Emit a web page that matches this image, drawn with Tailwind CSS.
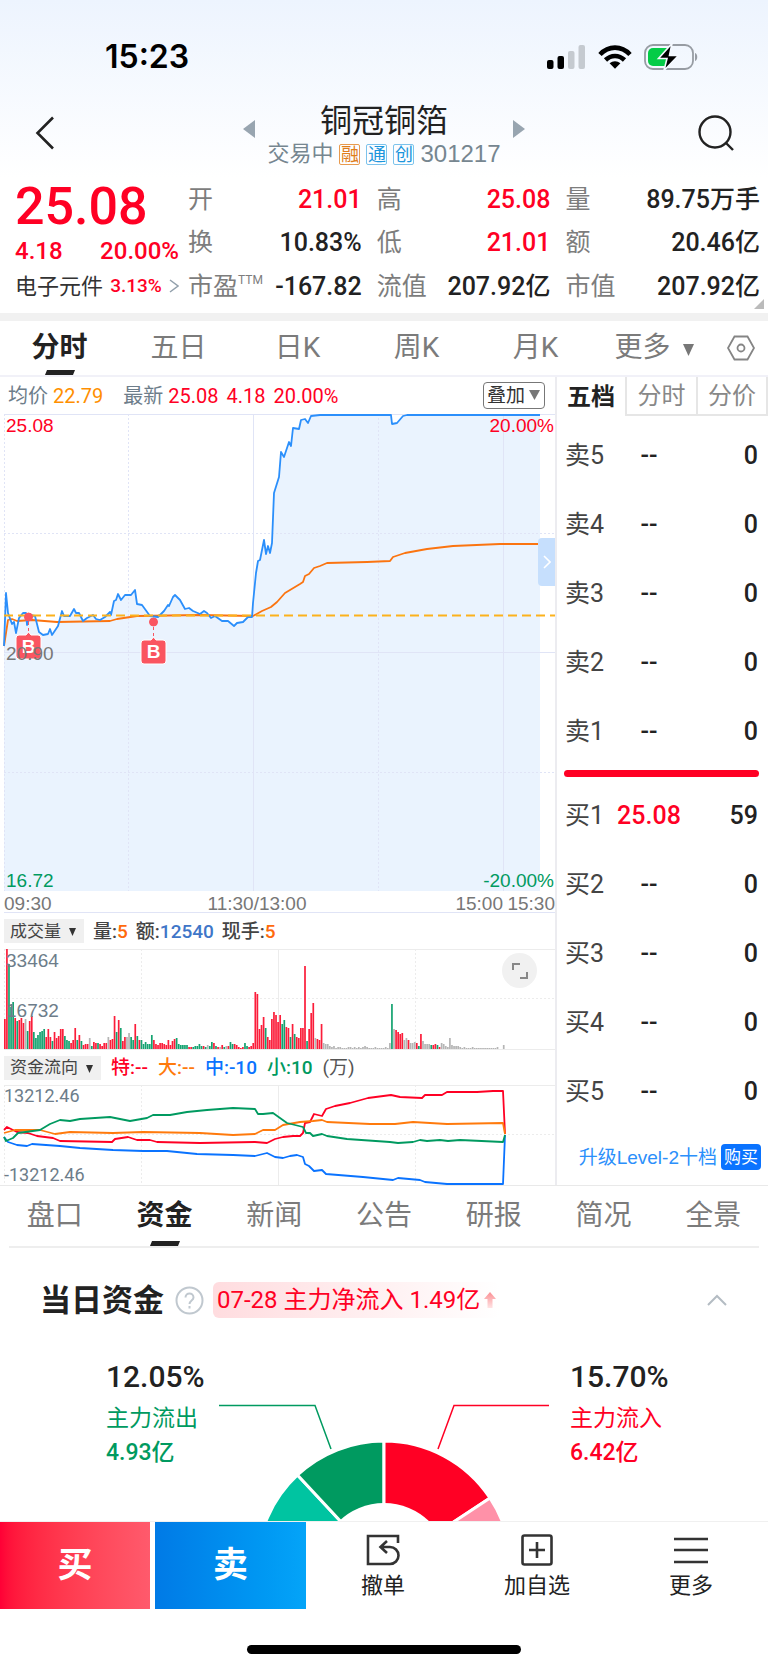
<!DOCTYPE html>
<html lang="zh-CN">
<head>
    <meta charset="UTF-8">
    <meta name="viewport" content="width=device-width, initial-scale=1.0">
    <title>铜冠铜箔 301217</title>
    <script src="https://cdn.jsdelivr.net/npm/@tailwindcss/browser@4"></script>
    <style>
        body {
            font-family: Roboto, "Noto Sans CJK SC", sans-serif;
        }
        .arial {
            font-family: "Liberation Sans", "Noto Sans CJK SC", sans-serif;
        }
    </style>
</head>
<body class="bg-white text-[#222]">
    <!-- Header -->
    <header class="bg-linear-to-b from-[#edf4fe] to-white">
        <div class="flex justify-between items-center pl-[105px] pr-[70px] pt-9 h-[78px]">
            <span class="text-[32px] leading-none font-semibold text-black font-[Inter]">15:23</span>
            <div class="flex items-center gap-3">
                <svg class="w-[39px] h-6" viewBox="0 0 39 24">
                    <rect x="0" y="15" width="6.500" height="9" rx="2" />
                    <rect x="10.500" y="11" width="6.500" height="13" rx="2" />
                    <rect x="21" y="6" width="6.500" height="18" rx="2" fill="#c5cad0" />
                    <rect x="31.500" y="0" width="6.500" height="24" rx="2" fill="#c5cad0" />
                </svg>
                <svg class="w-[34px] h-6" viewBox="0 0 34 24" fill="none" stroke="#000" stroke-width="4.600">
                    <path d="M2 9.500C10.500 0.300 23.500 0.300 32 9.500" />
                    <path d="M7.500 15C13 9.600 21 9.600 26.500 15" />
                    <path d="M17 23.800L11.600 18.300C14.800 15.600 19.200 15.600 22.400 18.300Z" fill="#000" stroke="none" />
                </svg>
                <svg class="w-[54px] h-7" viewBox="0 0 54 28">
                    <rect x="1" y="2" width="48" height="24" rx="8" fill="none" stroke="#979ca3" stroke-width="1.800" />
                    <path d="M51 10c3 1 3 7 0 8z" fill="#979ca3" />
                    <path d="M9 5h14v18H9a5 5 0 0 1-5-5v-8a5 5 0 0 1 5-5z" fill="#04cc47" />
                    <path d="M28 0.500L14.500 15.500h8.500L20 27.500 34.500 12.500h-9z" stroke="#f5f9ff" stroke-width="1.600" />
                </svg>
            </div>
        </div>
        <div class="flex justify-between items-center px-[34px] h-[100px] pt-[10px]">
            <button class="w-9" aria-label="返回">
                <svg class="w-[22px] h-[34px]" viewBox="0 0 22 34" fill="none" stroke="#222" stroke-width="2.600"><path d="M19 1.500L3.500 17L19 32.500" /></svg>
            </button>
            <div class="flex items-center gap-3">
                <button aria-label="上一只"><svg class="w-3 h-[18px] mb-2" viewBox="0 0 12 18"><path d="M12 0v18L0 9z" fill="#98a5b0" /></svg></button>
                <div class="flex flex-col items-center">
                    <h1 class="text-[32px] leading-[42px]">铜冠铜箔</h1>
                    <div class="flex items-center gap-[6px] h-6 text-[#768690] text-[22px] leading-none">
                        <span>交易中</span>
                        <span class="border border-[#e89a4e] text-[#e07d1a] text-[18px] leading-[19px] w-[21px] h-[21px] flex justify-center rounded-xs">融</span>
                        <span class="border border-[#7cc3ec] text-[#1b95dc] text-[18px] leading-[19px] w-[21px] h-[21px] flex justify-center rounded-xs">通</span>
                        <span class="border border-[#7cc3ec] text-[#1b95dc] text-[18px] leading-[19px] w-[21px] h-[21px] flex justify-center rounded-xs">创</span>
                        <span class="arial text-2xl leading-none">301217</span>
                    </div>
                </div>
                <button aria-label="下一只"><svg class="w-3 h-[18px] mb-2" viewBox="0 0 12 18"><path d="M0 0v18l12-9z" fill="#98a5b0" /></svg></button>
            </div>
            <button class="w-9" aria-label="搜索">
                <svg class="w-9 h-9" viewBox="0 0 36 36" fill="none" stroke="#222" stroke-width="2.400"><circle cx="17" cy="17" r="15.500" /><path d="M28 28l7 7" /></svg>
            </button>
        </div>
    </header>

    <!-- Quote -->
    <section class="relative flex h-[143px] pr-2 border-b-8 border-[#f1f1f1] whitespace-nowrap">
        <div class="w-[188px] shrink-0 pl-[15px] pr-[9px] text-[#ff0024]">
            <div class="text-[52px] leading-[58px] font-medium">25.08</div>
            <div class="flex justify-between text-2xl leading-[30px] font-medium"><span>4.18</span><span>20.00%</span></div>
            <a href="#" class="flex items-center justify-between h-10 text-[#333]">
                <span class="text-[22px]">电子元件</span>
                <span class="text-[19px] font-medium text-[#ff0024]">3.13%</span>
                <svg class="w-[10px] h-[14px]" viewBox="0 0 10 14" fill="none" stroke="#92a0ac" stroke-width="1.500"><path d="M1 1l8 6-8 6" /></svg>
            </a>
        </div>
        <dl class="grow grid grid-cols-[1fr_1fr_1.12fr] grid-rows-[43px_43px_44px] gap-x-[15px] text-[25px] leading-none [&>div]:flex [&>div]:justify-between [&>div]:items-center [&_dt]:text-[#7d7d7d] [&_dd]:font-medium">
            <div><dt>开</dt><dd class="text-[#ff0024]">21.01</dd></div>
            <div><dt>高</dt><dd class="text-[#ff0024]">25.08</dd></div>
            <div><dt>量</dt><dd>89.75万手</dd></div>
            <div><dt>换</dt><dd>10.83%</dd></div>
            <div><dt>低</dt><dd class="text-[#ff0024]">21.01</dd></div>
            <div><dt>额</dt><dd>20.46亿</dd></div>
            <div><dt class="flex">市盈<span class="text-[12px]">TTM</span></dt><dd>-167.82</dd></div>
            <div><dt>流值</dt><dd>207.92亿</dd></div>
            <div><dt>市值</dt><dd>207.92亿</dd></div>
        </dl>
        <svg class="absolute right-1 bottom-1 w-[10px] h-[10px]" viewBox="0 0 10 10"><path d="M10 0v10H0z" fill="#bbb" /></svg>
    </section>

    <!-- Period tabs -->
    <nav class="grid grid-cols-[119fr_119fr_119fr_119fr_119fr_118fr_55fr] h-14 border-b-2 border-[#f1f1f8] text-[28px] leading-none text-[#7b7b7b]">
        <button class="relative font-bold text-[#222]">分时
            <svg class="absolute bottom-0 left-1/2 -translate-x-1/2 w-[30px] h-[5px]" viewBox="0 0 30 5"><path d="M2 0h28l-2 5H0z" fill="#222" /></svg>
        </button>
        <button>五日</button>
        <button>日K</button>
        <button>周K</button>
        <button>月K</button>
        <button class="flex items-center justify-center gap-3">更多<svg class="w-[11px] h-3 mt-1" viewBox="0 0 11 12"><path d="M0 0h11L5.500 12z" fill="#777" /></svg></button>
        <button class="flex items-center justify-center" aria-label="设置">
            <svg class="w-7 h-[26px]" viewBox="0 0 28 26" fill="none" stroke="#858585" stroke-width="1.800"><path d="M7.500 1.500h13L27 13l-6.500 11.500h-13L1 13z" /><circle cx="14" cy="13" r="3.500" /></svg>
        </button>
    </nav>

    <main class="flex border-b border-[#e9e9e9]">
        <!-- Charts -->
        <div class="grow min-w-0">
            <div class="flex items-center h-[37px] pl-2 pr-[10px] text-xl leading-none text-[#ff0024] whitespace-nowrap">
                <span class="text-[#6d7d8a]">均价</span><span class="ml-[5px] text-[#ff8f00]">22.79</span>
                <span class="ml-5 text-[#6d7d8a]">最新</span><span class="ml-[5px]">25.08</span>
                <span class="ml-2">4.18</span><span class="ml-2">20.00%</span>
                <div class="relative ml-auto">
                    <select aria-label="叠加" class="appearance-none block w-[62px] h-[27px] pl-[3px] border border-[#777] rounded text-[19px] leading-none text-[#333]"><option>叠加</option></select>
                    <svg class="absolute right-[5px] top-2 w-[11px] h-[10px] pointer-events-none" viewBox="0 0 11 10"><path d="M0 0h11L5.500 10z" fill="#777" /></svg>
                </div>
            </div>

            <div class="relative">
                <svg class="arial block w-full text-[19px]" viewBox="0 0 555 499">
                    <path id="price-area" fill="#eaf3fe" />
                    <g stroke="#e0e4f6" fill="none">
                        <path d="M4 .5H555M4 238.500H555M253.500 0V477M503.500 0V477" />
                        <path d="M4 119.500H555M4 358.500H555M4.500 0V477M128.500 0V477M378.500 0V477" stroke-dasharray="2 2" />
                        <path d="M4 498.500H555" />
                    </g>
                    <polyline id="avg-line" fill="none" stroke="#fb7410" stroke-width="1.800" stroke-linejoin="round" />
                    <polyline id="price-line" fill="none" stroke="#2b8ffb" stroke-width="1.800" stroke-linejoin="round" />
                    <path d="M4 201.500H555" stroke="#fcb21c" stroke-width="2" stroke-dasharray="9 5" />
                    <g fill="#fa5560" stroke="#fa5560">
                        <circle cx="28.500" cy="203" r="4" />
                        <path d="M28.500 208v12" stroke-dasharray="3 3" />
                        <path d="M19 221h7l2.500-3 2.500 3h7a3 3 0 0 1 3 3v18a3 3 0 0 1-3 3H19a3 3 0 0 1-3-3v-18a3 3 0 0 1 3-3z" stroke="#fff" />
                        <circle cx="153.500" cy="208" r="4" />
                        <path d="M153.500 213v12" stroke-dasharray="3 3" />
                        <path d="M144 226h7l2.500-3 2.500 3h7a3 3 0 0 1 3 3v18a3 3 0 0 1-3 3h-19a3 3 0 0 1-3-3v-18a3 3 0 0 1 3-3z" stroke="#fff" />
                    </g>
                    <g fill="#fff" font-weight="bold" text-anchor="middle"><text x="28.500" y="239">B</text><text x="153.500" y="244">B</text></g>
                    <text x="6" y="18" fill="#ff0024">25.08</text>
                    <text x="554" y="18" fill="#ff0024" text-anchor="end">20.00%</text>
                    <text x="6" y="246" fill="#777">20.90</text>
                    <text x="6" y="473" fill="#009a60">16.72</text>
                    <text x="554" y="473" fill="#009a60" text-anchor="end">-20.00%</text>
                    <g fill="#777">
                        <text x="4" y="496">09:30</text>
                        <text x="257" y="496" text-anchor="middle">11:30/13:00</text>
                        <text x="503" y="496" text-anchor="end">15:00</text>
                        <text x="555" y="496" text-anchor="end">15:30</text>
                    </g>
                </svg>
                <button aria-label="收起" class="absolute right-0 top-[124px] w-[17px] h-12 rounded-l bg-[#c6dffd] flex items-center justify-center">
                    <svg class="w-2 h-[14px]" viewBox="0 0 8 14" fill="none" stroke="#fff" stroke-width="1.600"><path d="M1 1l6 6-6 6" /></svg>
                </button>
            </div>

            <div class="flex items-center h-[36px] pl-1 text-[19px] leading-none font-medium text-[#444] whitespace-nowrap">
                <div class="relative mr-[9px]">
                    <select aria-label="副图指标" class="appearance-none block w-20 h-6 pl-[6px] bg-[#f0f0f0] text-[17px] leading-none font-normal"><option>成交量</option></select>
                    <svg class="absolute right-2 top-[9px] w-[7px] h-2 pointer-events-none" viewBox="0 0 7 8"><path d="M0 0h7L3.500 8z" fill="#333" /></svg>
                </div>
                <span>量:<b class="font-medium text-[#ff6a0c]">5</b></span>
                <span class="ml-2">额:<b class="font-medium text-[#3f76c8]">12540</b></span>
                <span class="ml-2">现手:<b class="font-medium text-[#ff6a0c]">5</b></span>
            </div>
            <div class="relative">
                <svg class="arial block w-full text-[19px]" viewBox="0 0 555 101">
                    <g stroke="#ececec" fill="none">
                        <path d="M4 .5H555M4 100.500H555M278.500 0V100" />
                        <path d="M4 49.500H555M4.500 0V100M141.500 0V100M415.500 0V100" stroke-dasharray="2 2" />
                    </g>
                    <g id="volume-bars"></g>
                    <text x="6" y="18" fill="#6d7d8a">33464</text>
                    <text x="6" y="68" fill="#6d7d8a">16732</text>
                </svg>
                <button aria-label="全屏" class="absolute right-[18px] top-[4px] w-[35px] h-[35px] rounded-full bg-[#f1f1f1] flex items-center justify-center">
                    <svg class="w-4 h-4" viewBox="0 0 16 16" fill="none" stroke="#888" stroke-width="2"><path d="M1 7V1h7M15 9v6H8" /></svg>
                </button>
            </div>

            <div class="flex items-center h-[35px] pl-1 text-[19px] leading-none font-medium whitespace-nowrap">
                <div class="relative mr-[10px]">
                    <select aria-label="副图指标" class="appearance-none block w-[97px] h-6 pl-[6px] bg-[#f0f0f0] text-[17px] leading-none font-normal text-[#444]"><option>资金流向</option></select>
                    <svg class="absolute right-2 top-[9px] w-[7px] h-2 pointer-events-none" viewBox="0 0 7 8"><path d="M0 0h7L3.500 8z" fill="#333" /></svg>
                </div>
                <span class="text-[#ff0024]">特:--</span>
                <span class="ml-[10px] text-[#ff7a0c]">大:--</span>
                <span class="ml-[10px] text-[#0a73ff]">中:-10</span>
                <span class="ml-[10px] text-[#009a60]">小:10</span>
                <span class="ml-[10px] font-normal text-[#555]">(万)</span>
            </div>
            <svg class="block w-full overflow-visible text-[18px]" viewBox="0 0 555 100">
                <g stroke="#ececec" fill="none">
                    <path d="M4 .5H555M278.500 0V100" />
                    <path d="M4 49.500H555M4.500 0V100M141.500 0V100M415.500 0V100" stroke-dasharray="2 2" />
                </g>
                <g id="flow-lines" fill="none" stroke-width="1.800" stroke-linejoin="round"></g>
                <text x="4" y="17" fill="#6d7d8a">13212.46</text>
                <text x="4" y="96" fill="#6d7d8a">-13212.46</text>
            </svg>
        </div>

        <!-- Order book -->
        <aside class="w-[213px] shrink-0 border-l-2 border-[#ececf0] whitespace-nowrap">
            <div class="grid grid-cols-[68fr_71fr_72fr] h-[39px] text-2xl leading-none text-[#888]">
                <button class="font-bold text-[#222]">五档</button>
                <button class="border-l-2 border-b-2 border-[#e6e6e6]">分时</button>
                <button class="border-x-2 border-b-2 border-[#e6e6e6]">分价</button>
            </div>
            <table class="mt-[5px] w-full text-[25px] leading-none text-[#222] [&_tr]:h-[69px] [&_th]:w-[52px] [&_th]:pl-2 [&_th]:text-left [&_th]:font-normal [&_th]:text-[#444] [&_td]:font-medium [&_td:last-child]:text-right [&_td:last-child]:pr-[10px] [&_td:nth-child(2)]:w-20 [&_td:nth-child(2)]:text-center">
                <tbody>
                    <tr><th>卖5</th><td>--</td><td>0</td></tr>
                    <tr><th>卖4</th><td>--</td><td>0</td></tr>
                    <tr><th>卖3</th><td>--</td><td>0</td></tr>
                    <tr><th>卖2</th><td>--</td><td>0</td></tr>
                    <tr><th>卖1</th><td>--</td><td>0</td></tr>
                </tbody>
            </table>
            <div class="my-1 ml-[7px] mr-[9px] h-[7px] rounded-full bg-[#ff0024]"></div>
            <table class="w-full text-[25px] leading-none text-[#222] [&_tr]:h-[69px] [&_th]:w-[52px] [&_th]:pl-2 [&_th]:text-left [&_th]:font-normal [&_th]:text-[#444] [&_td]:font-medium [&_td:last-child]:text-right [&_td:last-child]:pr-[10px] [&_td:nth-child(2)]:w-20 [&_td:nth-child(2)]:text-center">
                <tbody>
                    <tr><th>买1</th><td class="text-[#ff0024]">25.08</td><td>59</td></tr>
                    <tr><th>买2</th><td>--</td><td>0</td></tr>
                    <tr><th>买3</th><td>--</td><td>0</td></tr>
                    <tr><th>买4</th><td>--</td><td>0</td></tr>
                    <tr><th>买5</th><td>--</td><td>0</td></tr>
                </tbody>
            </table>
            <div class="flex items-center justify-end gap-1 pr-[7px] mt-[18px] leading-none">
                <a href="#" class="arial text-[19px] text-[#2b8ffb]">升级Level-2十档</a>
                <button class="w-10 h-[26px] rounded bg-[#0a73ff] text-white text-[17px]">购买</button>
            </div>
        </aside>
    </main>

    <!-- Detail tabs -->
    <nav class="mx-[9px] border-b-2 border-[#eee]">
        <div class="-mx-[9px] grid grid-cols-7 h-[60px] text-[28px] leading-none text-[#7b7b7b]">
            <button>盘口</button>
            <button class="relative font-bold text-[#222]">资金
                <svg class="absolute bottom-0 left-1/2 -translate-x-1/2 w-[30px] h-[5px]" viewBox="0 0 30 5"><path d="M2 0h28l-2 5H0z" fill="#222" /></svg>
            </button>
            <button>新闻</button>
            <button>公告</button>
            <button>研报</button>
            <button>简况</button>
            <button>全景</button>
        </div>
    </nav>

    <!-- Capital flow today -->
    <section>
        <div class="flex items-center pl-10 pr-[41px] h-[104px] whitespace-nowrap">
            <h2 class="text-[31px] leading-none font-bold">当日资金</h2>
            <svg class="ml-[11px] w-[29px] h-[29px]" viewBox="0 0 29 29" fill="none" stroke="#c0c8cf" stroke-width="2"><circle cx="14.500" cy="14.500" r="13" /><path d="M10.500 11.500c0-5.500 8-5.500 8 0 0 3-4 3-4 6.500M14.500 20v2.500" /></svg>
            <div class="ml-[9px] h-9 flex items-center gap-1 pl-1 pr-1 rounded-md bg-linear-to-r from-[#ffdcdf] to-white text-[24px] leading-none text-[#ff0024]">07-28 主力净流入 1.49亿
                <svg class="w-3 h-4" viewBox="0 0 12 16"><defs><linearGradient id="up" x2="0" y2="1"><stop stop-color="#fb8f93" /><stop offset="1" stop-color="#ffe3e4" /></linearGradient></defs><path d="M6 0l6 7H8.500v9h-5V7H0z" fill="url(#up)" /></svg>
            </div>
            <button class="ml-auto" aria-label="收起">
                <svg class="w-5 h-3" viewBox="0 0 20 12" fill="none" stroke="#b4bcc3" stroke-width="2"><path d="M1 11l9-9 9 9" /></svg>
            </button>
        </div>
        <div class="grid grid-cols-[219fr_330fr_219fr] items-end min-h-[169px] pt-1 whitespace-nowrap">
            <div class="self-start pl-[106px] text-[#009a60] text-[23px]">
                <div class="text-[30px] leading-[42px] font-medium text-[#222]">12.05%</div>
                <div class="leading-[42px]">主力流出</div>
                <div class="leading-[26px] font-medium">4.93亿</div>
            </div>
            <svg class="block w-full" viewBox="219 1400 330 121">
                <g stroke="#fff" stroke-width="3">
                    <path d="M384 1568L257 1568A127 127 0 0 1 297.500 1475Z" fill="#00c4a1" />
                    <path d="M384 1568L297.500 1475A127 127 0 0 1 384 1441Z" fill="#009a60" />
                    <path d="M384 1568V1441A127 127 0 0 1 490 1498Z" fill="#ff0024" />
                    <path d="M384 1568L490 1498A127 127 0 0 1 511 1568Z" fill="#ff91a8" />
                </g>
                <circle cx="384" cy="1568" r="65" fill="#fff" />
                <path d="M219 1405.500H315L331 1449" fill="none" stroke="#009a60" stroke-width="1.500" />
                <path d="M549 1405.500H454L438 1449" fill="none" stroke="#ff0024" stroke-width="1.500" />
            </svg>
            <div class="self-start pl-[21px] text-[#ff0024] text-[23px]">
                <div class="text-[30px] leading-[42px] font-medium text-[#222]">15.70%</div>
                <div class="leading-[42px]">主力流入</div>
                <div class="leading-[26px] font-medium">6.42亿</div>
            </div>
        </div>
    </section>

    <!-- Trade bar -->
    <footer class="border-t border-[#f0f0f0]">
        <div class="grid grid-cols-[150fr_156fr_154fr_154fr_154fr] h-[87px] text-[22px] leading-none">
            <button class="bg-linear-to-r from-[#ff0036] to-[#ff5a6c] text-white text-[35px] font-bold">买</button>
            <button class="ml-[5px] bg-linear-to-r from-[#007ae6] to-[#04a4f8] text-white text-[35px] font-bold">卖</button>
            <button class="flex flex-col items-center justify-center gap-[9px]">
                <svg class="w-[34px] h-[32px]" viewBox="0 0 34 32" fill="none" stroke="#333" stroke-width="2.600"><path d="M32 9V2H2v28h22a8.500 8.500 0 0 0 0-17h-9M21 7l-6.500 6 6.500 6" /></svg>
                撤单
            </button>
            <button class="flex flex-col items-center justify-center gap-[9px]">
                <svg class="w-[32px] h-[32px]" viewBox="0 0 32 32" fill="none" stroke="#333" stroke-width="2.600"><rect x="1.500" y="1.500" width="29" height="29" rx="2" /><path d="M16 8v16M8 16h16" /></svg>
                加自选
            </button>
            <button class="flex flex-col items-center justify-center gap-[9px]">
                <svg class="w-[34px] h-[32px]" viewBox="0 0 34 32" fill="none" stroke="#333" stroke-width="2.600"><path d="M0 5h34M0 16h34M0 28h34" /></svg>
                更多
            </button>
        </div>
        <div class="pt-9 pb-[15px]"><div class="mx-auto w-[274px] h-[9px] rounded-full bg-black"></div></div>
    </footer>

    <script>
        const price = '4,232 6,179 8,199 12,210 14,208 16,219 19,204 23,199 26,199 27,211 30,201 35,202 39,218 43,221 48,220 50,215 52,221 58,212 62,197 64,202 70,202 74,195 76,199 79,199 83,207 87,204 93,201 96,205 100,206 105,203 110,198 111,201 114,187 116,186 118,180 121,186 125,181 131,181 135,176 137,190 142,191 150,202 158,203 164,197 168,191 169,192 173,183 175,181 180,186 185,195 189,194 193,197 200,200 204,197 207,199 211,204 215,202 222,207 228,207 234,212 237,209 243,208 248,203 252,203 253,189 256,159 258,147 260,146 264,126 266,140 268,132 270,139 272,129 274,79 279,63 281,38 284,43 289,28 291,32 293,14 299,15 301,6 305,5 308,9 311,2 320,1 391,1 392,10 397,9 403,2 407,1 540,1';
        const avg = '4,232 8,206 12,205 17,207 32,206 57,208 110,207 117,205 137,202 200,201 253,202 262,197 271,193 277,188 285,179 300,170 303,168 305,162 309,160 314,154 320,152 327,149 367,148 390,147 393,143 405,139 427,135 453,132 500,130 540,130';

        // One entry per minute: r = up, g = down, n = flat, then the height
        const volume = 'r30 r100 g85 g42 g47 r31 g28 r29 r31 r26 n30 g18 r28 r33 g17 g11 g14 g17 g18 g20 r12 r20 r12 g8 r17 r11 r13 r20 r20 g13 g9 g8 r6 r9 r21 g9 r14 g8 r4 r5 r5 n11 g3 r7 r6 g6 r5 r3 r6 r6 n12 r9 r10 r33 g17 r29 g21 r8 r12 n12 n16 g12 g9 r25 g13 r9 g9 g5 g7 g5 g5 g14 r9 r5 r4 r6 r6 r5 r4 r9 r4 r8 r10 g11 g5 g4 g4 g4 g4 r2 r2 g2 g3 g3 g5 g3 r3 g2 n4 g3 g7 r6 g3 r2 n2 r4 g2 n3 r3 g7 g5 r5 r4 r2 r1 r2 g6 g3 r2 r3 r6 r57 r55 r20 r24 r32 g21 r12 r9 r30 r37 r34 r27 r34 g25 g29 r22 r21 g12 r25 g15 r12 r11 r21 r21 r83 g8 r20 r36 r46 n11 r10 r9 r25 n6 n5 n5 n3 n2 n3 n1 n2 n2 n1 n1 n1 n2 n2 n1 n2 n1 n2 n1 n2 n3 n2 n1 n1 n1 n2 n1 n1 n1 n1 n2 n1 n6 g45 n20 r19 r17 r15 r16 n9 n11 r9 n6 n6 n7 r6 g3 r15 n8 n5 n5 n5 g4 r4 r5 g4 r2 n6 n5 n3 n2 n11 n4 n3 n3 n3 n2 n1 n2 n1 n1 n1 n2 n1 n1 n1 n1 n1 n1 n1 n1 n1 n1 n1 n2 n0 n0 n4';
        const volumeColors = { r: '#fb1d3a', g: '#14a370', n: '#b5b5b5' };

        const flows = {
            '#0a73ff': '4,52 8,57 17,60 27,61 32,59 60,61 80,63 113,65 143,66 167,66 197,69 233,70 255,71 267,68 275,72 283,73 290,71 297,70 303,72 305,79 309,81 314,86 322,85 326,89 363,92 393,95 398,93 420,95 425,97 447,99 503,99 505,50',
            '#ff0024': '4,45 7,42 17,47 28,48 37,51 53,53 60,56 112,57 115,54 128,52 137,55 150,55 157,57 200,58 255,57 267,58 275,54 283,52 293,51 300,51 303,48 305,38 310,37 314,29 322,31 326,24 335,21 350,18 368,13 391,10 400,12 422,13 425,10 442,10 447,7 477,7 493,6 503,6 505,49',
            '#ff7a0c': '4,48 15,45 40,45 55,49 70,47 113,48 143,47 200,48 233,50 255,49 263,45 275,45 283,40 300,37 313,36 322,35 327,37 370,39 395,39 413,37 447,39 503,38 505,49',
            '#009a60': '4,52 6,56 13,53 18,48 40,45 50,39 60,35 70,36 80,34 110,32 130,36 147,33 153,30 170,30 187,27 207,25 233,23 255,24 258,29 263,29 273,28 280,33 287,38 303,42 306,48 310,48 313,51 322,49 327,51 347,54 390,57 398,58 413,57 420,55 427,56 440,55 448,56 460,55 503,57 505,50'
        };

        document.getElementById('price-line').setAttribute('points', price);
        document.getElementById('price-area').setAttribute('d', `M${price.replaceAll(' ', 'L')}V477H4Z`);
        document.getElementById('avg-line').setAttribute('points', avg);

        document.getElementById('volume-bars').innerHTML = volume.split(' ').map((bar, i) => {
            const height = Number(bar.slice(1));
            return `<rect x="${4 + i * 2.07}" y="${100 - height}" width="1.7" height="${height}" fill="${volumeColors[bar[0]]}" />`;
        }).join('');

        document.getElementById('flow-lines').innerHTML = Object.entries(flows)
            .map(([color, points]) => `<polyline points="${points}" stroke="${color}" />`).join('');
    </script>
</body>
</html>
